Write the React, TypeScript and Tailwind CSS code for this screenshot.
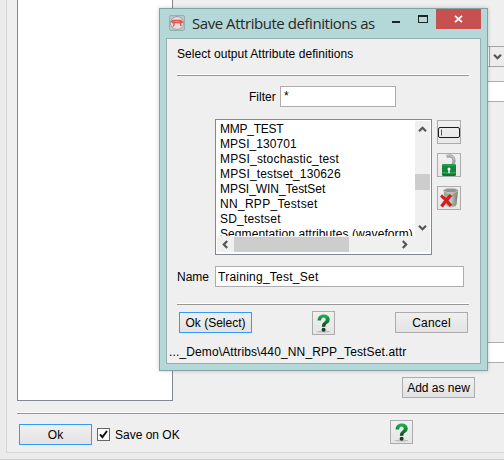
import type { ReactNode } from 'react';

const files = [
  { name: 'MMP_TEST', tracking: 'tracking-[-0.25px]' },
  { name: 'MPSI_130701', tracking: 'tracking-[0.05px]' },
  { name: 'MPSI_stochastic_test', tracking: 'tracking-[0.18px]' },
  { name: 'MPSI_testset_130626', tracking: 'tracking-[0.14px]' },
  { name: 'MPSI_WIN_TestSet', tracking: 'tracking-[-0.05px]' },
  { name: 'NN_RPP_Testset', tracking: 'tracking-[0.3px]' },
  { name: 'SD_testset', tracking: 'tracking-[0.2px]' },
  { name: 'Segmentation attributes (waveform)', tracking: 'tracking-[0.08px]' },
];

function Rule({ className = '' }: { className?: string }) {
  return <div className={`h-[2px] shrink-0 border-t border-b border-t-white border-b-[#979797] ${className}`} />;
}

function Button({ children, primary = false }: { children: ReactNode; primary?: boolean }) {
  return (
    <button
      className={`flex h-[21px] w-[73px] shrink-0 items-center justify-center border bg-linear-to-b from-[#f0f0f0] to-[#e3e3e3] pt-[2px] whitespace-nowrap ${
        primary ? 'border-[#3399ff]' : 'border-[#acacac]'
      }`}
    >
      {children}
    </button>
  );
}

function HelpButton() {
  return (
    <button className="flex h-6 w-[23px] shrink-0 items-center justify-center border border-[#acacac] bg-linear-to-b from-[#f0f0f0] to-[#e5e5e5]">
      <svg width="21" height="22" viewBox="0 0 21 22">
        <defs>
          <linearGradient id="help" x1="0" y1="0" x2="0" y2="1">
            <stop offset="0" stopColor="#20b457" />
            <stop offset=".55" stopColor="#128039" />
            <stop offset="1" stopColor="#163d20" />
          </linearGradient>
        </defs>
        <ellipse cx="10.5" cy="19.600" rx="7" ry="1" fill="#bdbdbd" />
        <path
          d="M4.600 8.600C4.600 4.600 7 2.400 10.600 2.400c3.700 0 6.100 2 6.100 5 0 2.200-1.200 3.400-2.700 4.400-1.200.8-1.600 1.500-1.600 3H8.900c0-2.400.6-3.700 2.100-4.800 1.200-.9 1.700-1.400 1.700-2.400S12 5.600 10.600 5.600c-1.600 0-2.300 1-2.500 3z"
          fill="url(#help)"
        />
        <circle cx="10.600" cy="17.800" r="2" fill="#193d23" />
      </svg>
    </button>
  );
}

function ToolButton({ children }: { children: ReactNode }) {
  return (
    <button className="flex size-6 items-center justify-center border border-[#acacac] bg-linear-to-b from-[#f0f0f0] to-[#e8e8e8]">
      {children}
    </button>
  );
}

function RenameIcon() {
  return (
    <svg width="22" height="22" viewBox="0 0 22 22" fill="none">
      <rect x=".5" y="6.500" width="21" height="10" rx="1.500" stroke="#1c1c1c" />
      <path d="M3.500 8.500v6" stroke="#555" />
    </svg>
  );
}

function UnlockIcon() {
  return (
    <svg width="22" height="22" viewBox="0 0 22 22">
      <path d="M8.500 2.500c4.500-1.700 7.500.7 7.500 4.200 0 2-.7 3-1.500 4.300" fill="none" stroke="#a2a2a2" strokeWidth="3.200" />
      <path d="M8.500 2c4.500-1.500 7.500.8 7.800 4" fill="none" stroke="#c7c7c7" strokeWidth="1.200" />
      <path d="M4 11.200q0-1 1-1.200h12q1 .2 1 1.200v9.300q0 1.500-2 1.500H6q-2 0-2-1.500z" fill="#14863b" />
      <path d="M4.500 11h13M4.500 18.500q6.500 1.500 13 0" stroke="#3cb15d" fill="none" />
      <path d="M4.500 21h13" stroke="#0c612a" />
      <circle cx="11" cy="15" r="1.500" fill="#fff" />
      <path d="M11 15v4" stroke="#fff" strokeWidth="1.400" />
    </svg>
  );
}

function TrashIcon() {
  return (
    <svg width="22" height="22" viewBox="0 0 22 22">
      <defs>
        <linearGradient id="bin">
          <stop stopColor="#999" />
          <stop offset=".5" stopColor="#cdcdcd" />
          <stop offset="1" stopColor="#707070" />
        </linearGradient>
      </defs>
      <path d="M5.500 3.500 7.500 17q1 3 5 3.500 5-.5 6-3l1.500-14z" fill="url(#bin)" />
      <path d="M7 7q6 4 12.500-.5M8 16.500q5 3 10.500-1" stroke="#83b645" fill="none" strokeWidth="1.300" />
      <ellipse cx="12.800" cy="3.500" rx="7.200" ry="2.200" fill="#929292" stroke="#c4c4c4" />
      <path d="M3 8.500q5 3.500 10 10.500M13 8q-5 5-9.500 11.500" stroke="#d51f1f" strokeWidth="3.300" fill="none" />
    </svg>
  );
}

function Chevron({ className = '' }: { className?: string }) {
  return (
    <svg className={className} width="9" height="9" viewBox="0 0 9 9">
      <path d="M1 2.800 4.500 6.200 8 2.800" fill="none" stroke="#555" strokeWidth="2.200" />
    </svg>
  );
}

function Dialog() {
  return (
    <div className="absolute top-2 left-[159px] flex h-[363px] w-[329px] flex-col border border-[#83a3a3] bg-[#b4d7d7] px-[6px] pb-[6px] shadow-[0_0_4px_rgba(0,0,0,0.2)]">
      <header className="flex h-[29px] shrink-0 items-start">
        <svg className="mt-[6px] ml-[3px] shrink-0" width="16" height="16" viewBox="0 0 16 16">
          <rect x=".5" y=".5" width="15" height="15" rx="1.500" fill="#b9c9c9" stroke="#94b1b1" />
          <circle cx="8" cy="8" r="6.500" fill="#e4dddd" stroke="#a1a1a1" />
          <path d="M1.800 7 4 5.500h7.500L14 7.500M3 7.500h10M5 6v4l-1 1.500M11 6l1 5" fill="none" stroke="#db5555" strokeWidth="1.300" />
        </svg>
        <h1 className="ml-[7px] w-[186px] whitespace-nowrap pt-[2px] font-['Open_Sans',sans-serif] text-[15px] leading-6 tracking-[-0.45px] text-[#282828]">
          Save Attribute definitions as
        </h1>
        <div className="ml-[14px] mt-[12px] h-[2px] w-2 bg-[#222]" />
        <div className="ml-[18px] mt-[6px] h-2 w-[10px] border border-t-2 border-[#222]" />
        <div className="ml-[8px] flex h-5 w-[45px] shrink-0 items-center justify-center bg-[#c75050]">
          <svg width="9" height="8" viewBox="0 0 9 8">
            <path d="m1 .8 7 6.400m0-6.400L1 7.200" stroke="#fff" strokeWidth="1.800" />
          </svg>
        </div>
      </header>
      <main className="flex h-[326px] flex-col border border-[#94b0b1] bg-[#efefef] pl-[10px] leading-[15px]">
        <p className="mt-[8px] whitespace-nowrap tracking-[0.04px]">Select output Attribute definitions</p>
        <Rule className="mt-[12px] w-[292px]" />
        <label className="mt-[10px] flex h-[21px] items-center">
          <span className="ml-[72px] w-[31px] pt-[2px]">Filter</span>
          <span className="h-[21px] w-[116px] border border-[#acacac] bg-white px-[3px] pt-[2px]">*</span>
        </label>
        <div className="mt-[12px] ml-[38px] flex h-[136px]">
          <div className="grid h-[136px] w-[217px] grid-cols-[198px_15px] grid-rows-[115px_16px] border border-[#828790] bg-white p-px">
            <ul className="overflow-hidden pt-px pl-[3px]">
              {files.map(({ name, tracking }) => (
                <li key={name} className={`h-[15px] whitespace-nowrap ${tracking}`}>{name}</li>
              ))}
            </ul>
            <div className="flex flex-col items-center bg-[#f0f0f0]">
              <Chevron className="mt-[4px] shrink-0 rotate-180" />
              <div className="mt-[40px] h-4 w-[15px] shrink-0 bg-[#cdcdcd]" />
              <Chevron className="mt-[33px] shrink-0" />
            </div>
            <div className="flex items-center bg-[#f0f0f0]">
              <Chevron className="ml-[4px] shrink-0 rotate-90" />
              <div className="ml-[4px] h-[15px] w-[115px] bg-[#cdcdcd]" />
              <Chevron className="ml-[51px] shrink-0 -rotate-90" />
            </div>
            <div className="bg-[#f0f0f0]" />
          </div>
          <div className="mt-px ml-[5px] flex flex-col gap-[9px]">
            <ToolButton><RenameIcon /></ToolButton>
            <ToolButton><UnlockIcon /></ToolButton>
            <ToolButton><TrashIcon /></ToolButton>
          </div>
        </div>
        <label className="mt-[11px] flex h-[21px] items-center">
          <span className="w-[38px] pt-[2px]">Name</span>
          <span className="h-[21px] w-[249px] border border-[#acacac] bg-white px-[2px] pt-[3px] tracking-[0.25px]">Training_Test_Set</span>
        </label>
        <Rule className="mt-[16px] w-[292px]" />
        <div className="mt-[6px] ml-[2px] flex h-6 w-[289px] items-start justify-between">
          <div className="pt-px"><Button primary>Ok (Select)</Button></div>
          <HelpButton />
          <div className="pt-px tracking-[0.2px]"><Button>Cancel</Button></div>
        </div>
        <p className="mt-[10px] -ml-[8px] whitespace-nowrap tracking-[0.13px]">..._Demo\Attribs\440_NN_RPP_TestSet.attr</p>
      </main>
    </div>
  );
}

export default function App() {
  return (
    <div className="relative h-[460px] w-[504px] overflow-hidden border-b border-[#cfcfcf] bg-[#ebebeb] pl-[6px] font-['Liberation_Sans',Arial,sans-serif] text-[12px] leading-[15px] text-black">
      <div className="flex h-[453px] flex-col border-b border-l border-[#d6d6d6] bg-[#efefef] pl-[10px]">
        <div className="flex h-[401px] justify-between">
          <div className="h-[401px] w-[156px] border border-t-0 border-[#828790] bg-white" />
          <div className="flex w-[102px] flex-col pt-[46px]">
            <div className="flex h-[21px] items-stretch border border-r-0 border-[#a5a5a5] bg-white pl-[86px]">
              <div className="flex w-[15px] items-center justify-center border-l border-[#a5a5a5] bg-[#ececec]">
                <Chevron className="ml-px" />
              </div>
            </div>
            <div className="mt-[14px] h-[21px] border border-r-0 border-[#acacac] bg-white" />
            <div className="mt-[240px] h-[21px] border border-r-0 border-[#acacac] bg-white" />
            <div className="mt-[14px]"><Button>Add as new</Button></div>
          </div>
        </div>
        <Rule className="mt-[11px]" />
        <footer className="flex h-[38px] items-start pl-[2px]">
          <div className="pt-[10px]"><Button primary>Ok</Button></div>
          <label className="mt-[14px] ml-[5px] flex h-[13px] w-[293px] items-center">
            <span className="mr-[5px] flex size-[13px] items-center justify-center border border-[#666] bg-white">
              <svg width="11" height="11" viewBox="0 0 11 11">
                <path d="m2 5.300 2.400 2.800L9 2" fill="none" stroke="#111" strokeWidth="2" />
              </svg>
            </span>
            <span className="pt-[2px]">Save on OK</span>
          </label>
          <div className="pt-[6px]"><HelpButton /></div>
        </footer>
      </div>
      <Dialog />
    </div>
  );
}
